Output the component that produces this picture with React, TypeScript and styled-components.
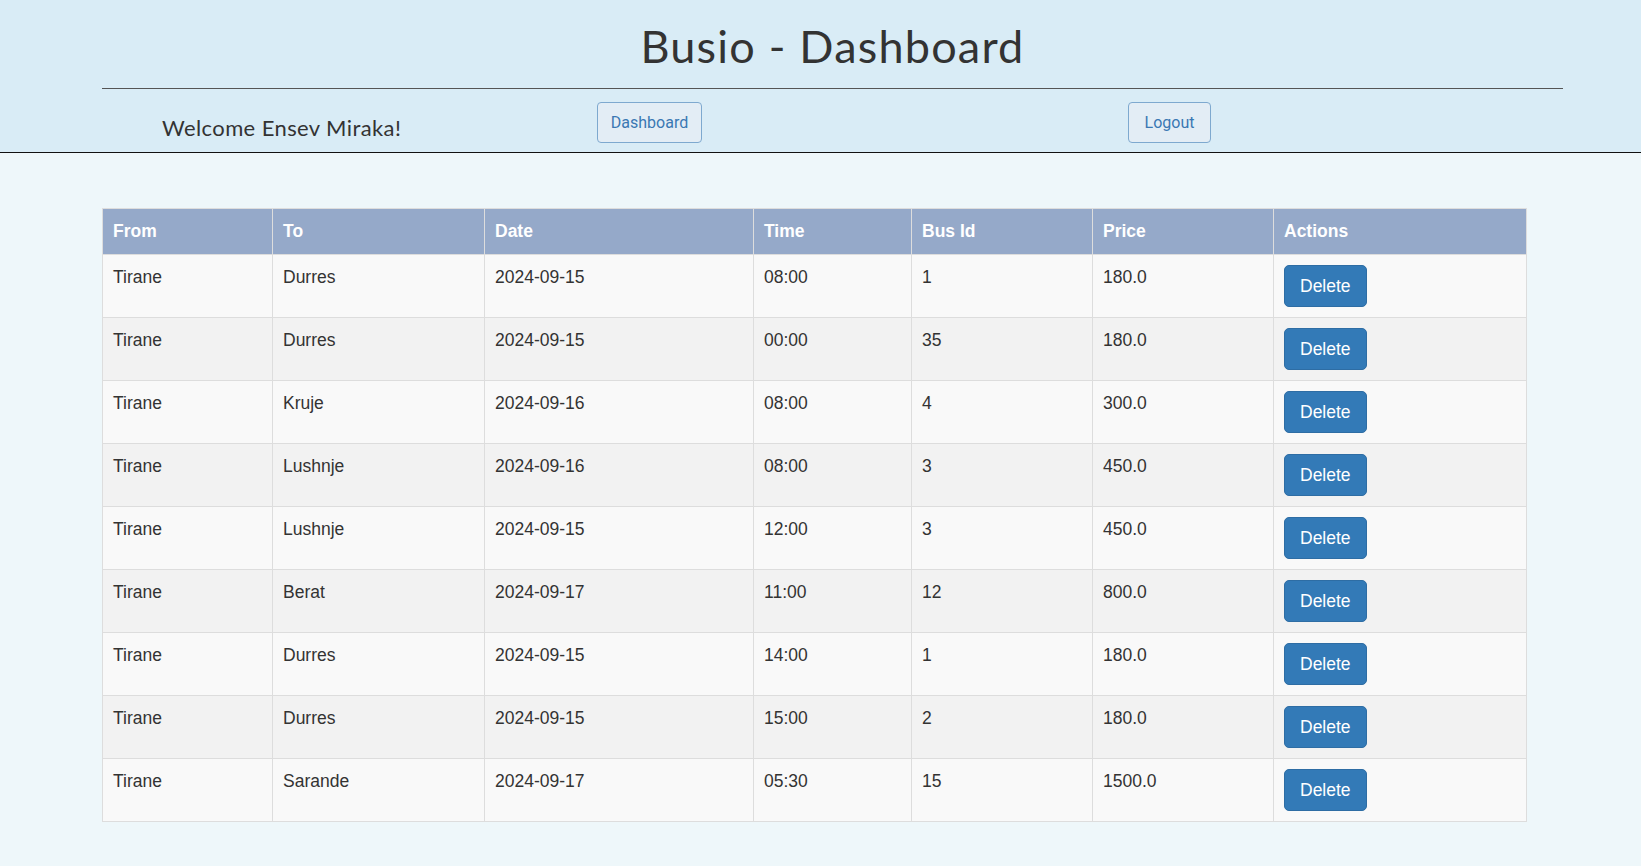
import React from "react";
import styled, { createGlobalStyle } from "styled-components";

const GlobalStyle = createGlobalStyle`
  html, body {
    margin: 0;
    padding: 0;
    background: #eef7fa;
    font-family: "Liberation Sans", Arial, sans-serif;
  }
  * { box-sizing: border-box; }
`;

const Page = styled.div`
  min-height: 866px;
  background: #eef7fa;
`;

const Header = styled.header`
  background: #d9ecf6;
  border-bottom: 1px solid #111;
  padding: 21px 78px 9px 102px;
`;

const Title = styled.h1`
  margin: 0;
  font-family: "Comic Sans MS", "Lato", sans-serif;
  font-weight: 400;
  font-size: 45px;
  line-height: 50px;
  letter-spacing: 1.2px;
  text-align: center;
  color: #333;
`;

const Rule = styled.hr`
  margin: 17px 0 0 0;
  border: 0;
  border-top: 1px solid #555;
  height: 0;
`;

const NavRow = styled.nav`
  display: grid;
  grid-template-columns: 495px 531px auto;
  align-items: start;
  margin-top: 13px;
`;

const Welcome = styled.h4`
  margin: 14px 0 0 0;
  padding-left: 60px;
  font-family: "Comic Sans MS", "Lato", sans-serif;
  font-weight: 400;
  font-size: 22px;
  line-height: 24px;
  letter-spacing: 0.4px;
  color: #333;
`;

const NavButton = styled.button<{ $w: number }>`
  width: ${(p) => p.$w}px;
  height: 41px;
  padding: 0;
  font-family: Roboto, "Liberation Sans", sans-serif;
  font-size: 16px;
  color: #3a78b3;
  background: #e3edf5;
  border: 1px solid #7ea9cf;
  border-radius: 4px;
  cursor: pointer;
  justify-self: start;
`;

const Main = styled.main`
  padding: 55px 115px 0 102px;
`;

const Table = styled.table`
  width: 1424px;
  table-layout: fixed;
  border-collapse: collapse;
  border: 1px solid #ddd;
  font-size: 17.5px;
  line-height: 25px;
  color: #333;
`;

const HeadCell = styled.th`
  background: #95a9c9;
  color: #fff;
  font-weight: 700;
  text-align: left;
  padding: 10px;
  border: 1px solid #ddd;
  border-bottom: 0;
  vertical-align: top;
`;

const Row = styled.tr<{ $alt: boolean }>`
  background: ${(p) => (p.$alt ? "#f2f2f2" : "#f9f9f9")};
`;

const Cell = styled.td`
  padding: 10px;
  border: 1px solid #ddd;
  vertical-align: top;
`;

const DeleteButton = styled.button`
  display: inline-block;
  padding: 7.5px 15px;
  font-family: "Liberation Sans", Arial, sans-serif;
  font-size: 17.5px;
  line-height: 25px;
  color: #fff;
  background: #337ab7;
  border: 1px solid #2e6da4;
  border-radius: 5px;
  cursor: pointer;
`;

const columns = [
  { label: "From", width: 170 },
  { label: "To", width: 212 },
  { label: "Date", width: 269 },
  { label: "Time", width: 158 },
  { label: "Bus Id", width: 181 },
  { label: "Price", width: 181 },
  { label: "Actions", width: 253 },
];

const trips = [
  ["Tirane", "Durres", "2024-09-15", "08:00", "1", "180.0"],
  ["Tirane", "Durres", "2024-09-15", "00:00", "35", "180.0"],
  ["Tirane", "Kruje", "2024-09-16", "08:00", "4", "300.0"],
  ["Tirane", "Lushnje", "2024-09-16", "08:00", "3", "450.0"],
  ["Tirane", "Lushnje", "2024-09-15", "12:00", "3", "450.0"],
  ["Tirane", "Berat", "2024-09-17", "11:00", "12", "800.0"],
  ["Tirane", "Durres", "2024-09-15", "14:00", "1", "180.0"],
  ["Tirane", "Durres", "2024-09-15", "15:00", "2", "180.0"],
  ["Tirane", "Sarande", "2024-09-17", "05:30", "15", "1500.0"],
];

export default function App() {
  return (
    <Page>
      <GlobalStyle />
      <Header>
        <Title>Busio - Dashboard</Title>
        <Rule />
        <NavRow>
          <Welcome>Welcome Ensev Miraka!</Welcome>
          <NavButton $w={105}>Dashboard</NavButton>
          <NavButton $w={83}>Logout</NavButton>
        </NavRow>
      </Header>
      <Main>
        <Table>
          <colgroup>
            {columns.map((c) => (
              <col key={c.label} style={{ width: c.width }} />
            ))}
          </colgroup>
          <thead>
            <tr>
              {columns.map((c) => (
                <HeadCell key={c.label}>{c.label}</HeadCell>
              ))}
            </tr>
          </thead>
          <tbody>
            {trips.map((t, i) => (
              <Row key={i} $alt={i % 2 === 1}>
                {t.map((v, j) => (
                  <Cell key={j}>{v}</Cell>
                ))}
                <Cell>
                  <DeleteButton>Delete</DeleteButton>
                </Cell>
              </Row>
            ))}
          </tbody>
        </Table>
      </Main>
    </Page>
  );
}
